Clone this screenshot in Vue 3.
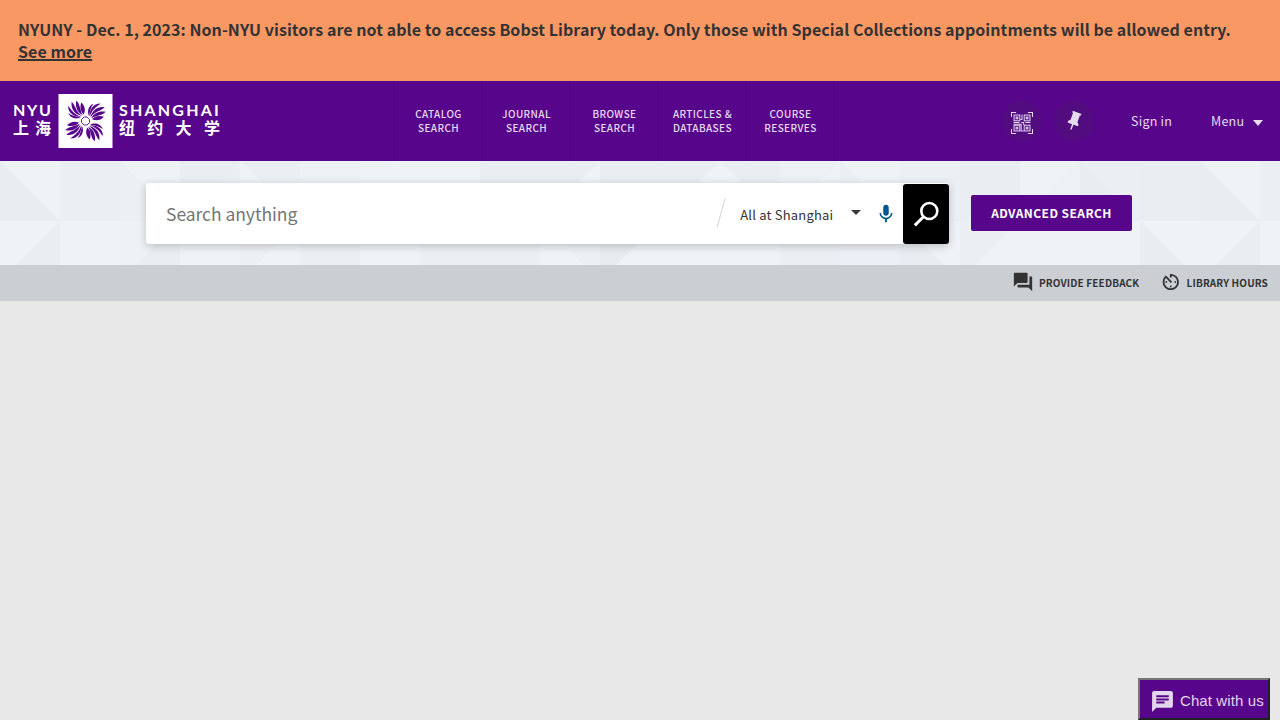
<script setup>
const links = [
  ['CATALOG', 'SEARCH'],
  ['JOURNAL', 'SEARCH'],
  ['BROWSE', 'SEARCH'],
  ['ARTICLES &', 'DATABASES'],
  ['COURSE', 'RESERVES'],
]
const petals = [0, 90, 180, 270]
const qrBlocks = ['translate(3 3)', 'translate(15 3)', 'translate(3 15)', 'translate(15 15)']
const facets = [
  ['0,0 60,60 0,60', '#e9edf2'],
  ['60,0 120,0 120,60 60,60', '#ebeff3'],
  ['120,0 180,60 120,60', '#ecf0f4'],
  ['180,0 240,0 180,60', '#eaeef2'],
  ['240,0 180,60 240,60', '#ebeff3'],
  ['240,0 300,0 300,60', '#ebeff4'],
  ['300,0 360,0 360,60 300,60', '#edf1f6'],
  ['480,0 600,0 540,60 480,60', '#eaeef2'],
  ['600,0 720,0 660,60 600,60', '#eaeef2'],
  ['720,0 780,0 780,60', '#eaeef2'],
  ['780,0 840,0 780,60', '#edf1f6'],
  ['840,0 900,60 840,60', '#ebeff4'],
  ['900,0 960,0 960,60 900,60', '#eceff4'],
  ['960,0 1020,0 1020,60 960,60', '#eaeef2'],
  ['1080,0 1080,60 1020,60', '#edf1f6'],
  ['1080,0 1140,60 1080,60', '#e9edf2'],
  ['1080,0 1140,0 1140,60', '#ebeff4'],
  ['1140,0 1200,0 1200,60 1140,60', '#eaeef3'],
  ['1200,0 1260,60 1200,60', '#e9edf2'],
  ['1260,0 1280,0 1280,60 1260,60', '#ebeff3'],
  ['60,60 60,104 16,104', '#eaeef3'],
  ['120,60 180,60 180,104 120,104', '#eef2f6'],
  ['180,60 180,104 136,104', '#eaeef3'],
  ['240,60 300,60 256,104 240,104', '#eceff4'],
  ['300,60 360,60 360,104 300,104', '#ebeff4'],
  ['420,60 540,60 540,104 420,104', '#ebeff4'],
  ['540,60 600,60 600,104 584,104', '#ecf0f5'],
  ['600,60 660,60 616,104 600,104', '#e8ecf1'],
  ['780,60 840,60 840,104 780,104', '#ebeff4'],
  ['840,60 900,60 900,104 840,104', '#eceff5'],
  ['900,60 944,104 900,104', '#e9edf2'],
  ['960,60 1020,60 976,104 960,104', '#ebeff3'],
  ['1140,60 1184,104 1140,104', '#e9edf2'],
  ['1260,60 1260,104 1216,104', '#eaeef3'],
]
</script>

<template>
  <div class="page">
    <div class="alert">
      <div class="alert-msg">NYUNY - Dec. 1, 2023: Non-NYU visitors are not able to access Bobst Library today. Only those with Special Collections appointments will be allowed entry.</div>
      <a class="more">See more</a>
    </div>

    <header class="bar">
      <div class="logo">
        <div class="word nyu"><span class="en">NYU</span><span class="zh">上海</span></div>
        <svg class="emblem" viewBox="0 0 54 54">
          <rect width="54" height="54" fill="#fff" />
          <g v-for="a in petals" :key="a" :transform="`rotate(${a} 27 27)`" fill="#57068c">
            <path d="M22.800 8.500C26.500 12 27.300 16 25.200 20.500C21.800 17.500 21.200 13 22.800 8.500Z" />
            <path d="M17.800 6.800C21.800 10 21.200 16 24.300 21.300C18.500 18.500 16.500 12.500 17.800 6.800Z" />
            <path d="M13.200 7.800C17 11.500 16.800 17 23.400 22C15.800 20.200 12 14.500 13.200 7.800Z" />
            <path d="M9.600 12C12.500 14.500 13.500 19.500 22.600 22.700C15.500 23.300 9.500 19 9.600 12Z" />
            <path d="M9.800 19C13 21.500 17 22.600 22.500 23.300C17.500 25.800 11.500 24 9.800 19Z" />
          </g>
          <path d="M25.500 23H28.500L31 25.500V28.500L28.500 31H25.500L23 28.500V25.500Z" fill="#fff" stroke="#57068c" stroke-width=".9" />
        </svg>
        <div class="word shanghai"><span class="en">SHANGHAI</span><span class="zh">纽约大学</span></div>
      </div>
      <nav class="links">
        <a v-for="l in links" :key="l[0]"><span>{{ l[0] }}</span><span>{{ l[1] }}</span></a>
      </nav>
      <div class="user">
        <span class="round">
          <svg class="qr" width="22" height="22" viewBox="0 0 26 26" fill="none" stroke="#e3d5ec" stroke-width="1.200">
            <path d="M.6 6V.6H6M20 .6h5.400V6M.6 20v5.400H6M20 25.400h5.400V20" />
            <g v-for="q in qrBlocks" :key="q" :transform="q"><rect x=".6" y=".6" width="6.800" height="6.800" /><rect x="3" y="3" width="2" height="2" /></g>
            <path d="M13 3v6h-2M3 12.500h7M12 12.500h3v3M17 12.500h6M3 14.500h9v8h3" />
          </svg>
        </span>
        <span class="round pin">
          <svg width="22" height="22" viewBox="0 0 24 24" fill="#e6daee"><path transform="rotate(20 12 12)" d="M16 12V4h1V2H7v2h1v8l-2 2v2h5.200v6h1.600v-6H18v-2l-2-2z" /></svg>
        </span>
        <span class="signin">Sign in</span>
        <span class="menu">Menu</span>
        <i class="caret"></i>
      </div>
    </header>

    <section class="search">
      <svg class="pattern" width="1280" height="104" viewBox="0 0 1280 104">
        <polygon v-for="(f, i) in facets" :key="i" :points="f[0]" :fill="f[1]" />
      </svg>
      <div class="box">
        <span class="ph">Search anything</span>
        <svg class="slash" width="12" height="32" viewBox="0 0 12 32"><path d="M10 .5L2.200 29.500" stroke="#dcdcdc" stroke-width="1.200" /></svg>
        <span class="scope">All at Shanghai</span>
        <i class="caret dark"></i>
        <svg class="mic" width="22" height="22" viewBox="0 0 24 24" fill="#00558c"><path d="M12 14c1.660 0 3-1.340 3-3V5c0-1.660-1.340-3-3-3S9 3.340 9 5v6c0 1.660 1.340 3 3 3zm5.300-3c0 3-2.540 5.100-5.300 5.100S6.700 14 6.700 11H5c0 3.410 2.720 6.230 6 6.720V21h2v-3.280c3.280-.48 6-3.300 6-6.720h-1.700z" /></svg>
        <button class="go">
          <svg width="28" height="28" viewBox="0 0 28 28" fill="none" stroke="#fff"><circle cx="17.300" cy="11" r="8" stroke-width="2.600" /><path d="M11.500 16.700L2.800 25.400" stroke-width="3" /></svg>
        </button>
      </div>
      <button class="adv">ADVANCED SEARCH</button>
    </section>

    <div class="tools">
      <a class="feedback"><svg width="22" height="22" viewBox="0 0 24 24" fill="#333"><path d="M21 6h-2v9H6v2c0 .55.45 1 1 1h11l4 4V7c0-.55-.45-1-1-1zm-4 6V3c0-.55-.45-1-1-1H3c-.55 0-1 .45-1 1v14l4-4h10c.55 0 1-.45 1-1z" /></svg><span>PROVIDE FEEDBACK</span></a>
      <a class="hours"><svg width="22" height="22" viewBox="0 0 24 24" fill="#333"><path d="M11 17c0 .55.45 1 1 1s1-.45 1-1-.45-1-1-1-1 .45-1 1zm0-14v4h2V5.080c3.390.49 6 3.390 6 6.920 0 3.870-3.130 7-7 7s-7-3.130-7-7c0-1.680.59-3.220 1.580-4.420L12 13l1.410-1.410-6.800-6.800v.02C4.420 6.450 3 9.050 3 12c0 4.970 4.020 9 9 9 4.970 0 9-4.030 9-9s-4.030-9-9-9h-1zm7 9c0-.55-.45-1-1-1s-1 .45-1 1 .45 1 1 1 1-.45 1-1zM6 12c0 .55.45 1 1 1s1-.45 1-1-.45-1-1-1-1 .45-1 1z" /></svg><span>LIBRARY HOURS</span></a>
    </div>

    <button class="chat">
      <svg width="25" height="25" viewBox="0 0 24 24" fill="#e3d5ec"><path d="M20 2H4c-1.100 0-1.990.9-1.990 2L2 22l4-4h14c1.100 0 2-.9 2-2V4c0-1.100-.9-2-2-2zM6 9h12v2H6V9zm8 5H6v-2h8v2zm4-6H6V6h12v2z" /></svg>
      <span>Chat with us</span>
    </button>
  </div>
</template>

<style>
html, body { margin: 0; background: #e8e8e8; }
</style>

<style scoped>
* { box-sizing: border-box; }
.page { position: relative; width: 1280px; height: 720px; overflow: hidden; background: #e8e8e8; font-family: "Noto Sans CJK SC", "Noto Sans", sans-serif; color: #333; white-space: nowrap; }
button { font-family: inherit; margin: 0; }
.alert { height: 81px; padding: 18px 18px; background: #fa9864; font-size: 16px; font-weight: 700; line-height: 22px; letter-spacing: .052px; }
.more { display: block; width: max-content; text-decoration: underline; text-decoration-thickness: 1.500px; }
.bar { height: 80px; background: #57068c; display: flex; position: relative; }
.logo { display: flex; width: 394px; padding: 13px 0 0 13px; color: #fff; }
.emblem { width: 55px; height: 54px; margin: 0 6px 0 6px; }
.word { display: flex; flex-direction: column; padding-top: 7px; }
.nyu { width: 39px; }
.en { font-family: Lato, sans-serif; font-weight: 700; font-size: 16px; line-height: 17px; letter-spacing: 2.200px; }
.nyu .en { letter-spacing: 1.600px; }
.zh { font-weight: 700; font-size: 16px; line-height: 19px; }
.nyu .zh { letter-spacing: 6px; }
.shanghai .zh { letter-spacing: 12.300px; }
.links { display: flex; }
.links a { width: 88px; border-right: 1px solid #4b0878; display: flex; flex-direction: column; align-items: center; padding-top: 26px; font-size: 10px; font-weight: 500; line-height: 14px; letter-spacing: .4px; color: #e6daee; }
.links a:first-child { width: 89px; border-left: 1px solid #4b0878; }
.user { margin-left: auto; display: flex; align-items: center; padding-right: 17px; color: #e6daee; font-size: 12.500px; letter-spacing: .25px; }
.round { width: 40px; height: 40px; border-radius: 50%; background: #520c80; display: flex; align-items: center; justify-content: center; margin-right: 12px; }
.qr { margin-top: 3px; }
.pin { margin-right: 37px; }
.signin { width: 80px; margin-top: -1px; }
.menu { width: 42px; margin-top: -1px; }
.caret { border: 5px solid transparent; border-top: 6px solid #e6daee; border-bottom: 0; margin-top: 3px; }
.search { height: 104px; position: relative; background: #eff3f8; display: flex; padding: 22px 0 0 146px; }
.pattern { position: absolute; left: 0; top: 0; }
.box { position: relative; width: 803px; height: 61px; background: #fff; border-radius: 3px; box-shadow: 0 2px 8px rgba(0,0,0,.22); display: flex; align-items: center; padding-left: 20px; }
.ph { width: 550px; font-size: 17.500px; letter-spacing: -.05px; }
.ph { color: #757575; }
.slash { margin-right: 12px; }
.scope { width: 112px; padding: 1px 0 0 1px; font-size: 13px; letter-spacing: .2px; }
.caret.dark { border-top: 5px solid #3a3a3a; margin: 0 14px 3px 0; }
.mic { margin: 1px 6px 0 0; }
.go { width: 46px; height: 60px; margin-left: auto; background: #000; border: 0; border-radius: 3px; padding: 0; display: flex; align-items: center; justify-content: center; }
.adv { position: relative; width: 161px; height: 36px; margin: 12px 0 0 22px; border: 0; border-radius: 2px; background: #57068c; color: #fff; font-size: 12px; font-weight: 700; letter-spacing: .43px; padding: 0; line-height: 36px; }
.tools { height: 36px; background: #cbced3; display: flex; justify-content: flex-end; padding: 0 12px 2px 0; font-size: 10px; font-weight: 700; letter-spacing: .15px; }
.tools a { display: flex; align-items: center; }
.feedback { width: 148px; }
.hours { width: 108px; }
.tools span { padding-top: 1px; }
.tools svg { margin-right: 5px; }
.chat { position: absolute; left: 1138px; top: 678px; width: 132px; height: 42px; border: 2px solid; border-color: #767676 #212121 #212121 #767676; background: #57068c; color: #e3d5ec; padding: 3px 0 0 10px; display: flex; align-items: center; gap: 5px; font-family: "Liberation Sans", sans-serif; font-size: 15px; letter-spacing: .1px; }
.chat svg { margin-top: 2px; }
</style>
